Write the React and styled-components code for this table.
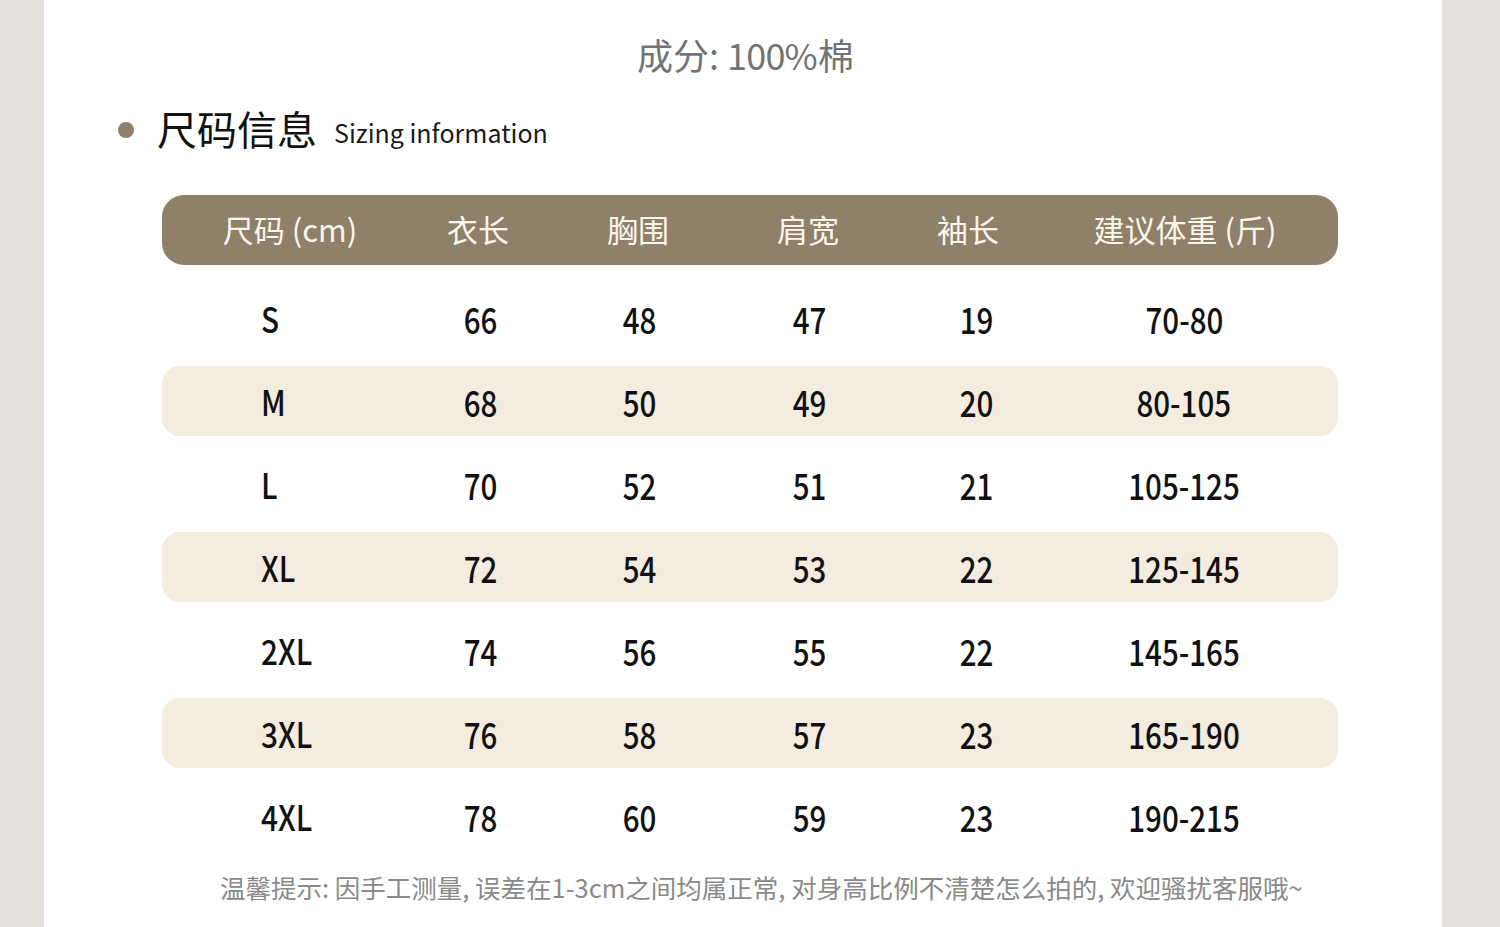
import React from "react";
import styled, { createGlobalStyle } from "styled-components";

const Global = createGlobalStyle`
  html, body { margin: 0; padding: 0; }
  body {
    background: #e6e0da;
    font-family: "Noto Sans CJK SC", "Noto Sans", sans-serif;
  }
`;

const Page = styled.div`
  width: 1500px;
  height: 927px;
  overflow: hidden;
  background: #e6e0da;
  display: flex;
  justify-content: flex-start;
`;

const Card = styled.div`
  margin-left: 44px;
  width: 1398px;
  height: 927px;
  background: #ffffff;
  display: flex;
  flex-direction: column;
  padding-top: 32px;
  box-sizing: border-box;
`;

const Title = styled.div`
  align-self: flex-start;
  margin-left: 593px;
  font-size: 36px;
  line-height: 44px;
  color: #737373;
  white-space: nowrap;
`;

const Tight = styled.span`
  letter-spacing: -0.8px;
  margin-right: 1px;
`;

const Narrow = styled.span`
  display: inline-block;
  transform: scaleX(${(p) => p.$sx || 0.82});
  transform-origin: ${(p) => p.$origin || "center"};
`;

const Heading = styled.div`
  margin-top: 29px;
  margin-left: 74px;
  display: flex;
  align-items: center;
  height: 46px;
`;

const Dot = styled.span`
  width: 16px;
  height: 16px;
  border-radius: 50%;
  background: #8f806a;
  margin-right: 23px;
  margin-top: 4px;
`;

const HeadingCn = styled.span`
  font-size: 40px;
  line-height: 46px;
  color: #111111;
  font-weight: 400;
`;

const HeadingEn = styled.span`
  font-size: 25px;
  line-height: 46px;
  color: #1a1a1a;
  margin-left: 17px;
  margin-top: 8px;
`;

const Table = styled.div`
  margin-top: 44px;
  margin-left: 118px;
  width: 1176px;
  display: flex;
  flex-direction: column;
  gap: 13px;
`;

const cols = "256px 124px 196px 140px 184px 246px";

const HeaderRow = styled.div`
  display: grid;
  grid-template-columns: ${cols};
  padding-right: 30px;
  height: 70px;
  align-items: center;
  background: #8f806a;
  border-radius: 22px;
  margin-bottom: 5px;
`;

const HeadCell = styled.div`
  justify-self: center;
  color: #fcf6ea;
  font-size: 31px;
  line-height: 40px;
  white-space: nowrap;
  margin-top: -2px;
  margin-left: ${(p) => p.$shift || 0}px;
`;

const Row = styled.div`
  display: grid;
  grid-template-columns: ${cols};
  padding-right: 30px;
  height: 70px;
  align-items: center;
  border-radius: 18px;
  background: ${(p) => (p.$striped ? "#f3ecdf" : "transparent")};
`;

const SizeCell = styled.div`
  justify-self: start;
  padding-left: 99px;
  font-size: 35px;
  line-height: 40px;
  color: #111111;
  font-weight: 500;
  white-space: nowrap;
`;

const Cell = styled.div`
  justify-self: center;
  font-size: 36px;
  line-height: 40px;
  color: #111111;
  font-weight: 500;
  white-space: nowrap;
  margin-left: ${(p) => p.$shift || 0}px;
`;

const Note = styled.div`
  margin-top: 21px;
  margin-left: 176px;
  font-size: 25.5px;
  line-height: 30px;
  color: #8a8a8a;
  white-space: nowrap;
`;

const headers = ["尺码 (cm)", "衣长", "胸围", "肩宽", "袖长", "建议体重 (斤)"];
const headShifts = [0, -4, -4, 0, -4, 0];
const rows = [
  ["S", "66", "48", "47", "19", "70-80"],
  ["M", "68", "50", "49", "20", "80-105"],
  ["L", "70", "52", "51", "21", "105-125"],
  ["XL", "72", "54", "53", "22", "125-145"],
  ["2XL", "74", "56", "55", "22", "145-165"],
  ["3XL", "76", "58", "57", "23", "165-190"],
  ["4XL", "78", "60", "59", "23", "190-215"],
];
const shifts = [1, 0, 4, 14, -2];

export default function App() {
  return (
    <>
      <Global />
      <Page>
        <Card>
          <Title>
            成分: <Tight>100%</Tight>棉
          </Title>
          <Heading>
            <Dot />
            <HeadingCn>尺码信息</HeadingCn>
            <HeadingEn>Sizing information</HeadingEn>
          </Heading>
          <Table>
            <HeaderRow>
              {headers.map((h, i) => (
                <HeadCell key={h} $shift={headShifts[i]}>
                  {h}
                </HeadCell>
              ))}
            </HeaderRow>
            {rows.map((r, i) => (
              <Row key={r[0]} $striped={i % 2 === 1}>
                <SizeCell>
                  <Narrow $sx={0.85} $origin="left">{r[0]}</Narrow>
                </SizeCell>
                {r.slice(1).map((v, j) => (
                  <Cell key={j} $shift={shifts[j]}>
                    <Narrow>{v}</Narrow>
                  </Cell>
                ))}
              </Row>
            ))}
          </Table>
          <Note>
            温馨提示: 因手工测量, 误差在1-3cm之间均属正常, 对身高比例不清楚怎么拍的, 欢迎骚扰客服哦~
          </Note>
        </Card>
      </Page>
    </>
  );
}
